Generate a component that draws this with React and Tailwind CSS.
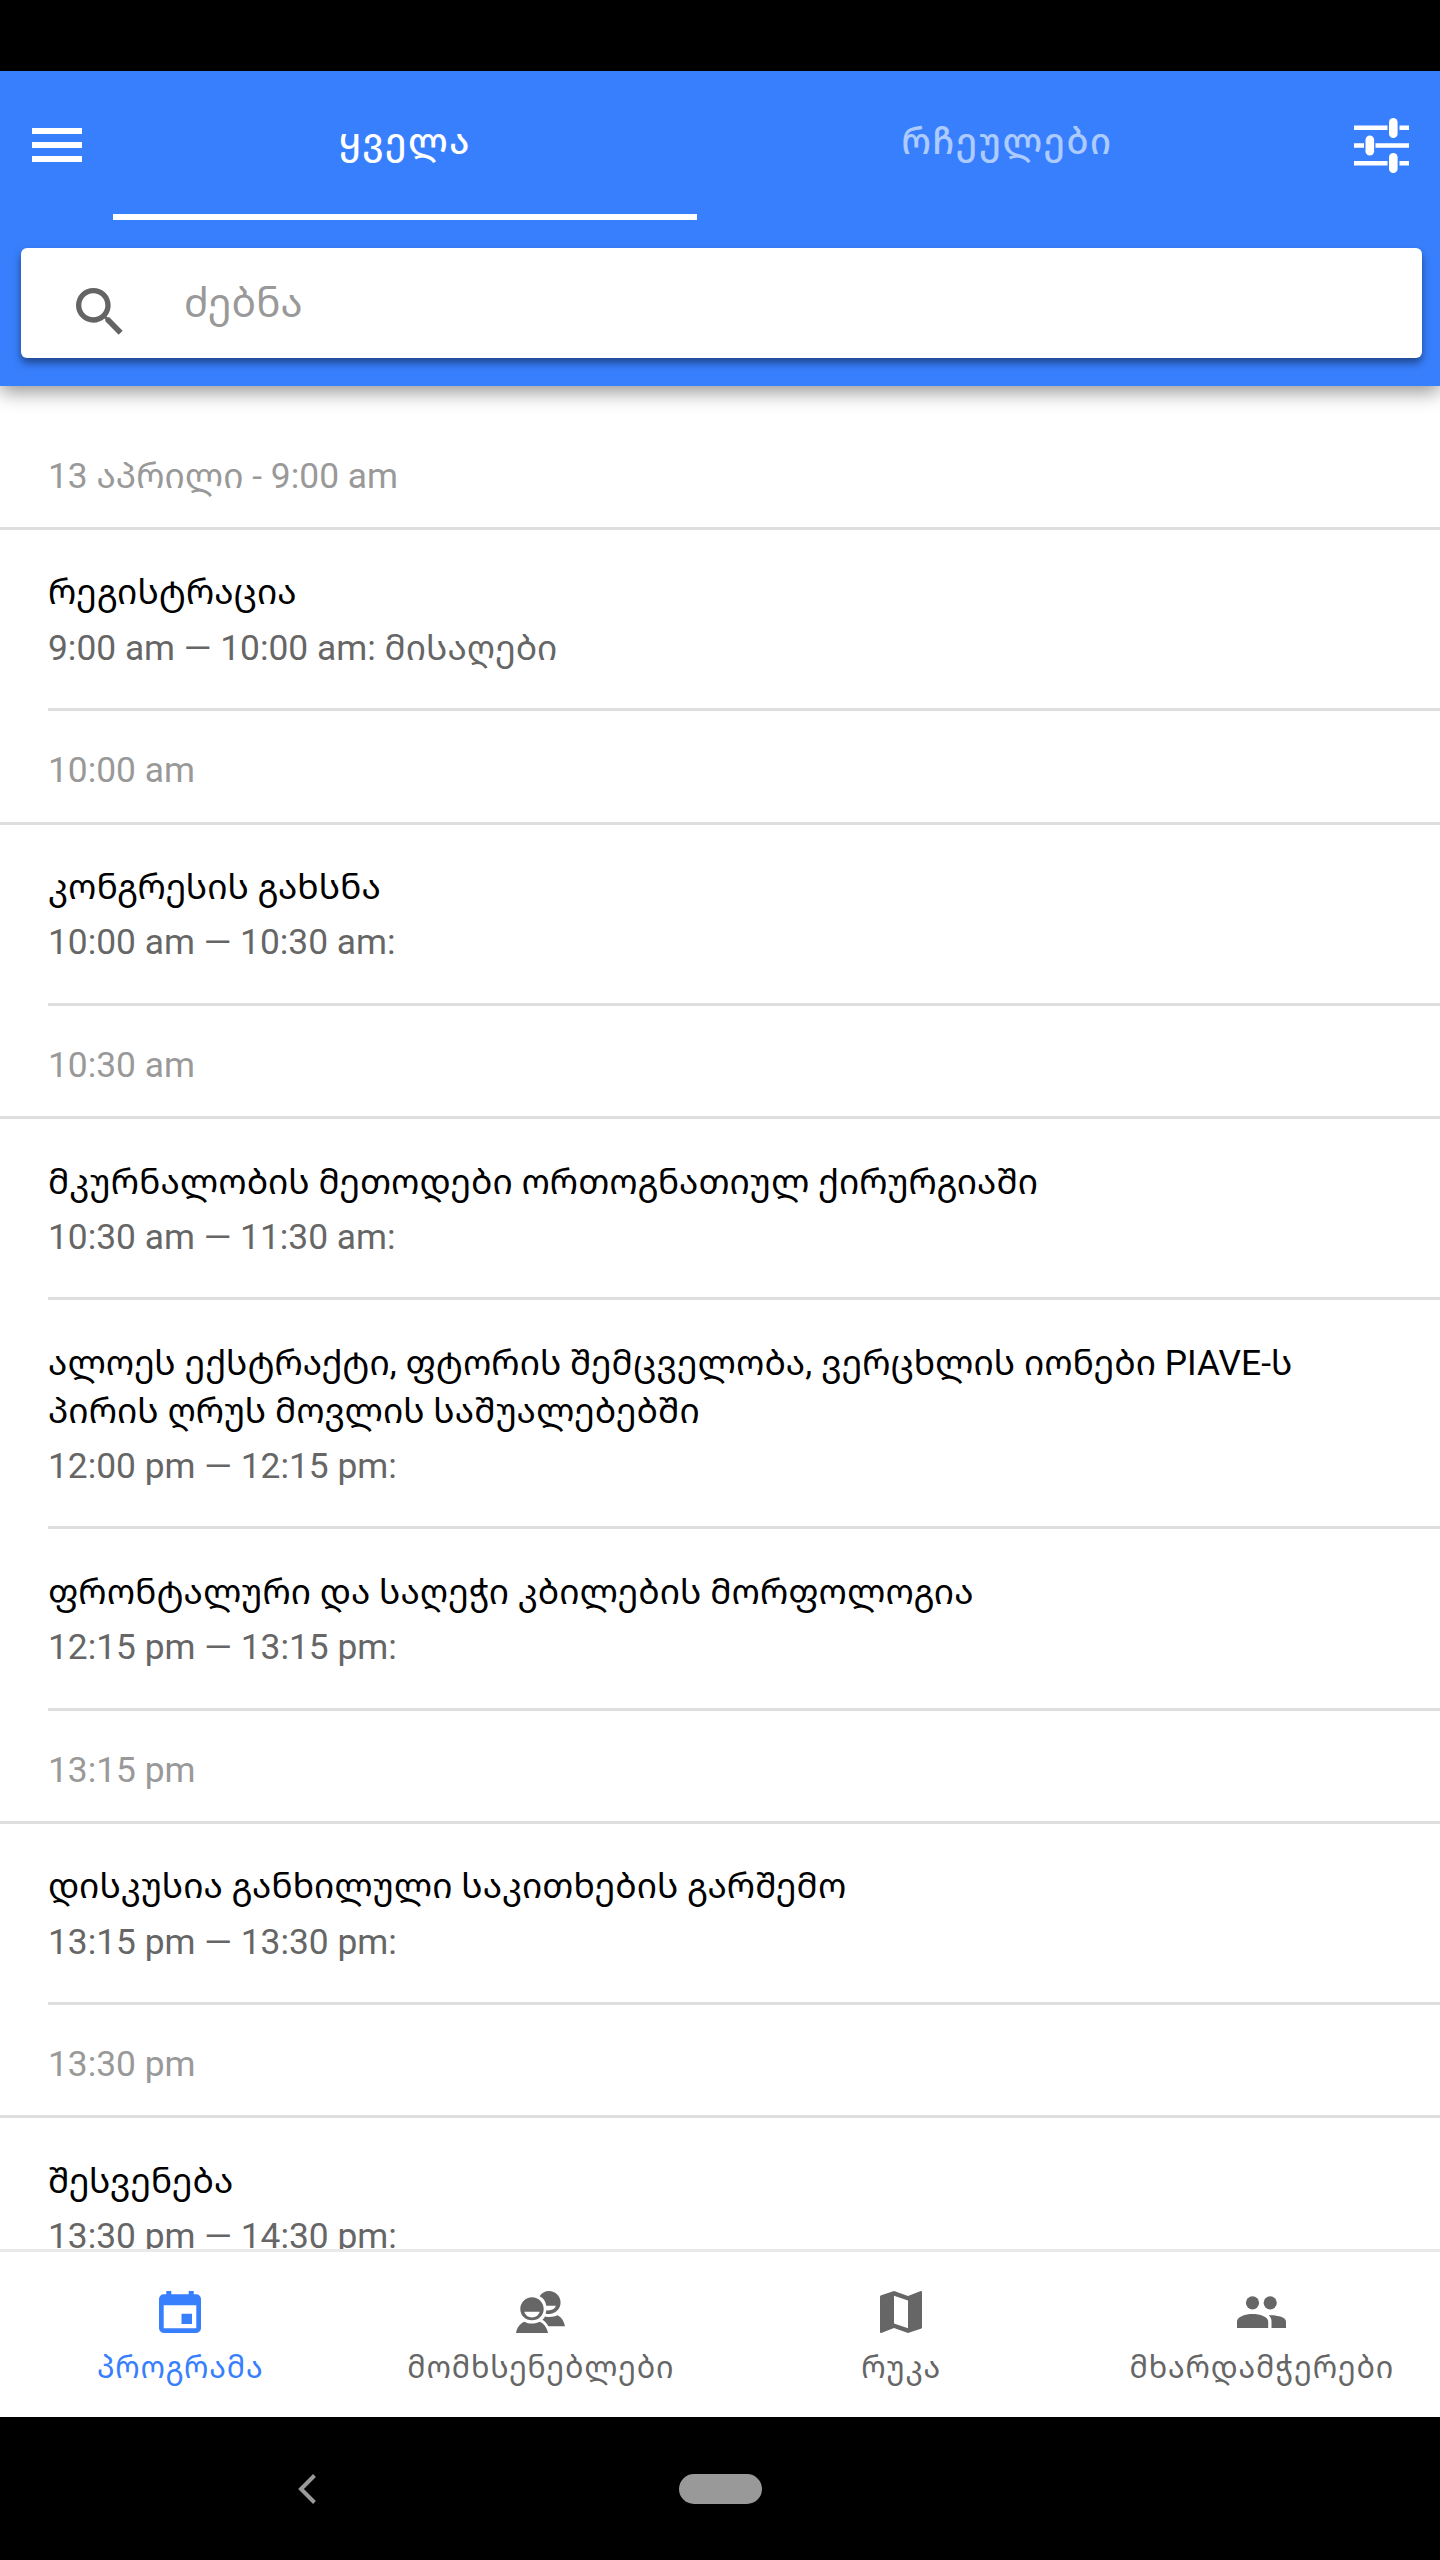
import { useState } from 'react'
import { MdSearch } from 'react-icons/md'

const schedule = [
  {
    label: '13 აპრილი - 9:00 am',
    sessions: [{ title: 'რეგისტრაცია', when: '9:00 am — 10:00 am: მისაღები' }],
  },
  {
    label: '10:00 am',
    sessions: [{ title: 'კონგრესის გახსნა', when: '10:00 am — 10:30 am:' }],
  },
  {
    label: '10:30 am',
    sessions: [
      { title: 'მკურნალობის მეთოდები ორთოგნათიულ ქირურგიაში', when: '10:30 am — 11:30 am:' },
      {
        title: 'ალოეს ექსტრაქტი, ფტორის შემცველობა, ვერცხლის იონები PIAVE-ს პირის ღრუს მოვლის საშუალებებში',
        when: '12:00 pm — 12:15 pm:',
      },
      { title: 'ფრონტალური და საღეჭი კბილების მორფოლოგია', when: '12:15 pm — 13:15 pm:' },
    ],
  },
  {
    label: '13:15 pm',
    sessions: [{ title: 'დისკუსია განხილული საკითხების გარშემო', when: '13:15 pm — 13:30 pm:' }],
  },
  {
    label: '13:30 pm',
    sessions: [{ title: 'შესვენება', when: '13:30 pm — 14:30 pm:' }],
  },
]

const tabs = [
  { label: 'პროგრამა', icon: CalendarIcon },
  { label: 'მომხსენებლები', icon: SpeakersIcon },
  { label: 'რუკა', icon: MapIcon },
  { label: 'მხარდამჭერები', icon: PeopleIcon },
]

function MenuIcon() {
  return (
    <svg viewBox="0 0 50 34" className="w-[50px] h-[34px]" fill="currentColor">
      <path d="M0 0h50v6H0zM0 14h50v6H0zM0 28h50v6H0z" />
    </svg>
  )
}

function OptionsIcon() {
  return (
    <svg viewBox="0 0 55 55" className="w-[55px] h-[55px]" fill="currentColor">
      <path d="M0 7.5h33.5v4.5H0zM45.5 7.5H55v4.500h-9.5zM0 25.300h10v4.500H0zM21.500 25.300H55v4.500H21.500zM0 43h33.500v4.500H0zM45.500 43H55v4.500h-9.500z" />
      <rect x="35" y="0" width="8.6" height="20" rx="4.3" />
      <rect x="11.5" y="17.6" width="8.6" height="20" rx="4.3" />
      <rect x="35" y="35" width="8.6" height="20" rx="4.3" />
    </svg>
  )
}

function CalendarIcon() {
  return (
    <svg viewBox="0 0 42 42" className="w-[42px] h-[42px]" fill="currentColor">
      <path
        fillRule="evenodd"
        d="M7.3 0h5v3.3h17.4V0h5v3.3h2.6A4.7 4.7 0 0 1 42 8v29.3a4.7 4.7 0 0 1-4.7 4.7H4.7A4.7 4.7 0 0 1 0 37.3V8a4.7 4.7 0 0 1 4.7-4.7h2.6zM4.700 14.300v23h32.600v-23zM22.500 22.800H33V33H22.500z"
      />
    </svg>
  )
}

function SpeakersIcon() {
  return (
    <svg viewBox="0 0 49 42" className="w-[49px] h-[42px]" fill="currentColor">
      <path d="M33 0c6.400 0 11.600 5.200 11.600 11.600S39.400 23 33 23c-1.300 0-2.500-.2-3.500-.6.500-1 .8-2 .9-3.100 4.900.5 8.500-1.200 9.600-4.600H30.300C29.600 10 27.200 6.800 23.600 5.200 25.600 2 29 0 33 0z" />
      <path
        fillRule="evenodd"
        d="M16 6.300c6.500 0 11.700 5.200 11.700 11.700S22.500 29.300 16 29.300 4.300 24.500 4.300 18 9.500 6.300 16 6.300zM8.300 20.700c.9 3.500 3.900 5.700 7.700 5.700s6.800-2.200 7.700-5.700z"
      />
      <path d="M0 42c1-5.300 4-9.500 8.300-11.300C10.500 32 13.200 32.500 16 32.500s5.500-.6 7.700-1.800C28 32.600 31 36.700 32 42zM49 35.200H32.300c-1.400-2.800-3.400-5-5.800-6.500 1-.9 1.900-2 2.500-3.200 4.500 1 9 .5 12.500-1.200C45.500 26.300 48 30.300 49 35.200z" />
    </svg>
  )
}

function MapIcon() {
  return (
    <svg viewBox="0 0 42 42" className="w-[42px] h-[42px]" fill="currentColor">
      <path
        fillRule="evenodd"
        d="M40.800 0 28 5 14 0 1.200 4.200C.5 4.500 0 5 0 5.700v35.100c0 .8.5 1.200 1.200 1.200L14 37l14 5 12.800-4.200c.7-.3 1.200-.8 1.200-1.500V1.200C42 .5 41.500 0 40.800 0zM28 37.300l-14-4.900V4.700l14 4.900z"
      />
    </svg>
  )
}

function PeopleIcon() {
  return (
    <svg viewBox="0 0 49 42" className="w-[49px] h-[42px]" fill="currentColor">
      <circle cx="15.5" cy="11.8" r="6.6" />
      <circle cx="33.2" cy="11.8" r="6.6" />
      <path d="M0 37v-6.500C0 25.500 8.500 23 15.600 23s15.600 2.500 15.600 7.500V37zM34.500 37v-6.500c0-2.700-1-4.900-2.900-6.300C40 23.800 49 26 49 30.500V37z" />
    </svg>
  )
}

function Session({ title, when }) {
  return (
    <li className="pl-12">
      <div className="border-b-[3px] border-[#dedede] pt-[39.5px] pb-[36.3px] pr-24">
        <h3 className="text-[35.35px] leading-[47.8px] text-black">{title}</h3>
        <p className="mt-[6.6px] text-[35.35px] leading-[48px] text-[#666]">{when}</p>
      </div>
    </li>
  )
}

export default function App() {
  const [active, setActive] = useState(0)

  return (
    <div className="flex flex-col w-[1440px] h-[2560px] overflow-hidden bg-black font-[Roboto,'Noto_Sans_Georgian','Noto_Sans',sans-serif]">
      {/* Status bar */}
      <div className="h-[71px] shrink-0" />

      {/* Header */}
      <header className="relative z-10 h-[315px] shrink-0 bg-[#387ffe] text-white shadow-[0_6px_18px_rgba(0,0,0,0.42)]">
        <div className="flex h-[149px]">
          <button className="w-[113px] pl-8 pb-[1px]"><MenuIcon /></button>
          <button className="w-[584px] pb-2 pt-[7px] border-b-[6px] border-white text-[36px] font-medium tracking-[1.6px]">ყველა</button>
          <button className="w-[620px] pb-2 pt-[7px] border-b-[6px] border-transparent text-[36px] font-medium tracking-[1.6px] text-white/60">რჩეულები</button>
          <button className="pl-[37px]"><OptionsIcon /></button>
        </div>
        <div className="mt-7 ml-[21px] mr-[18px] h-[110px] flex items-center rounded-[6px] bg-white shadow-[0_5px_8px_rgba(0,0,0,0.45)]">
          <MdSearch className="ml-[47px] mt-[18px] text-[64px] text-[#646464]" />
          <input
            placeholder="ძებნა"
            className="ml-[52px] mt-[1px] flex-1 bg-transparent text-[40.5px] text-black placeholder:text-[#999] outline-none"
          />
        </div>
      </header>

      {/* Schedule */}
      <main className="flex-1 min-h-0 overflow-hidden bg-white pt-[30.6px]">
        {schedule.map(group => (
          <section key={group.label}>
            <h2 className="h-[113.4px] pl-12 pt-[35px] border-b-[3px] border-[#dedede] text-[35.35px] leading-[48px] text-[#999]">
              {group.label}
            </h2>
            <ul>
              {group.sessions.map(s => <Session key={s.when} {...s} />)}
            </ul>
          </section>
        ))}
      </main>

      {/* Bottom tabs */}
      <nav className="flex h-[168px] shrink-0 border-t-[3px] border-[#e9e9e9] bg-white">
        {tabs.map(({ label, icon: Icon }, i) => (
          <button
            key={label}
            onClick={() => setActive(i)}
            className={`w-[360.5px] shrink-0 flex flex-col items-center pt-[39px] ${active === i ? 'text-[#387ffe]' : 'text-[#666]'}`}
          >
            <Icon />
            <span className="mt-[14px] text-[30.5px] leading-[42px] tracking-[0.8px] whitespace-nowrap">{label}</span>
          </button>
        ))}
      </nav>

      {/* System navigation */}
      <div className="flex h-[143px] shrink-0 items-center text-[#999]">
        <svg viewBox="0 0 18 30" className="ml-[298px] w-[18px] h-[30px]" fill="none" stroke="currentColor" strokeWidth="4">
          <path d="M16.500 1.500 3 15l13.500 13.500" />
        </svg>
        <div className="ml-[363px] w-[83px] h-[30px] rounded-full bg-[#999]" />
      </div>
    </div>
  )
}
